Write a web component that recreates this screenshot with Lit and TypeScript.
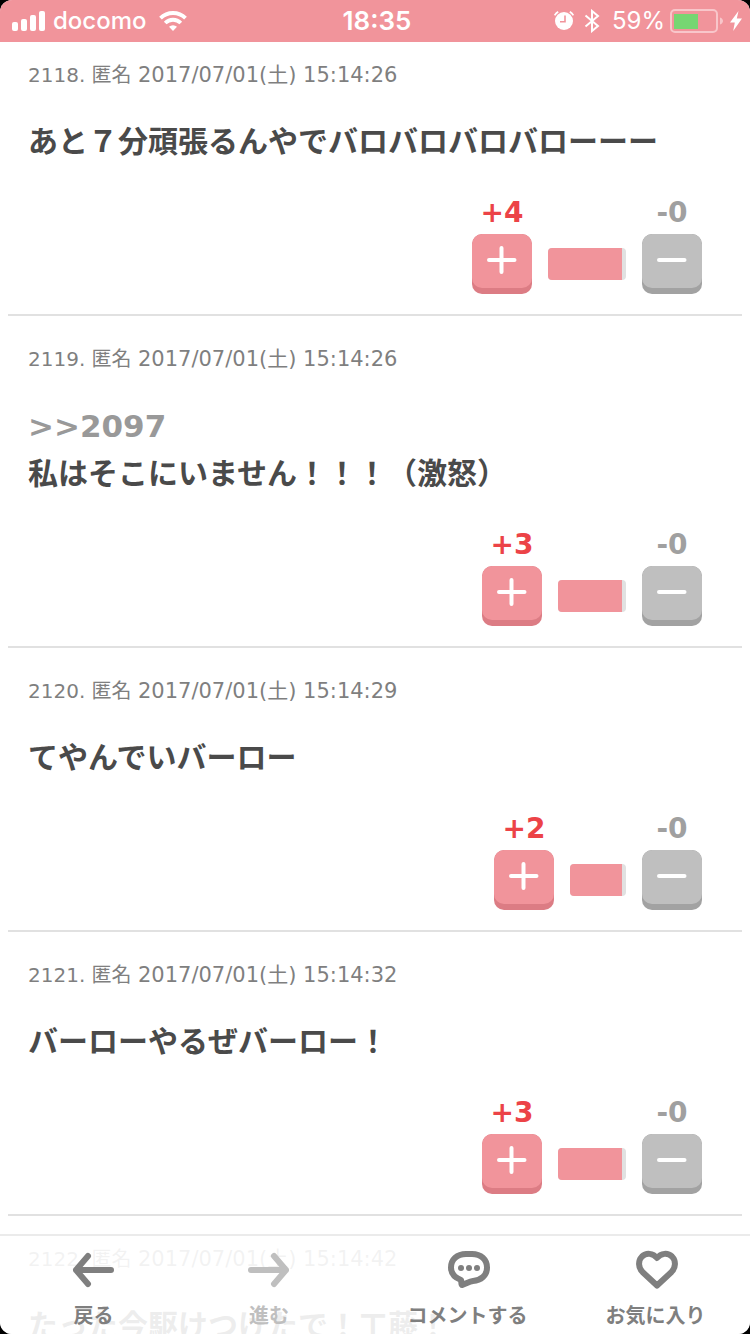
import { LitElement, html, svg, css } from "lit";
import { customElement, property } from "lit/decorators.js";

interface Comment {
  id: number;
  time: string;
  text: string;
  reply?: number;
  plus: number;
  minus: number;
  bar: number;
}

const comments: Comment[] = [
  { id: 2118, time: "15:14:26", text: "あと７分頑張るんやでバロバロバロバローーー", plus: 4, minus: 0, bar: 78 },
  { id: 2119, time: "15:14:26", text: "私はそこにいません！！！（激怒）", reply: 2097, plus: 3, minus: 0, bar: 68 },
  { id: 2120, time: "15:14:29", text: "てやんでいバーロー", plus: 2, minus: 0, bar: 56 },
  { id: 2121, time: "15:14:32", text: "バーローやるぜバーロー！", plus: 3, minus: 0, bar: 68 },
  { id: 2122, time: "15:14:42", text: "たった今駆けつけたで！工藤！", plus: 1, minus: 0, bar: 44 },
];

@customElement("status-bar")
class StatusBar extends LitElement {
  static styles = css`
    :host {
      display: grid;
      grid-template-columns: 1fr auto 1fr;
      align-items: center;
      height: 42px;
      padding: 0 8px 0 12px;
      background: #f1949b;
      color: #fff;
      font: 500 24px/42px Inter, "Noto Sans CJK JP", sans-serif;
    }
    .side { display: flex; align-items: center; }
    .carrier { margin: 0 12px 0 8px; }
    .time { font-size: 26px; font-weight: 600; }
    .end { justify-content: flex-end; }
    .percent { margin: 0 5px 0 12px; font-weight: 400; }
    .bt { margin-left: 10px; }
    .bolt { margin-left: 6px; }
    svg { display: block; flex: none; }
  `;

  render() {
    return html`
      <div class="side">
        <svg width="33" height="20" viewBox="0 0 33 20" fill="#fff" aria-hidden="true">
          <rect x="0" y="11" width="6" height="9" rx="2" />
          <rect x="9" y="8" width="6" height="12" rx="2" />
          <rect x="18" y="4" width="6" height="16" rx="2" />
          <rect x="27" y="0" width="6" height="20" rx="2" />
        </svg>
        <span class="carrier">docomo</span>
        <svg width="28" height="20" viewBox="0 0 28 20" fill="none" stroke="#fff" stroke-width="3.8" aria-hidden="true">
          <path d="M1.5 7.2a17.6 17.6 0 0 1 25 0" />
          <path d="M6.2 12a11 11 0 0 1 15.6 0" />
          <path d="M14 20l-4-4.2a5.8 5.8 0 0 1 8 0z" fill="#fff" stroke="none" />
        </svg>
      </div>
      <span class="time">18:35</span>
      <div class="side end">
        <svg width="20" height="20" viewBox="0 0 20 20" aria-hidden="true">
          <circle cx="10" cy="10" r="9" fill="#fff" />
          <path d="M.6 4.400A11 11 0 0 1 4.200.8M15.800.8a11 11 0 0 1 3.600 3.600" fill="none" stroke="#fff" stroke-width="1.8" />
          <path d="M11 4.500v6.300H6" fill="none" stroke="#f1949b" stroke-width="1.600" />
        </svg>
        <svg class="bt" width="16" height="24" viewBox="0 0 16 24" fill="none" stroke="#fff" stroke-width="2" aria-hidden="true">
          <path d="M1.500 6.500L14 17 8 22V2l6 5L1.500 17.500" />
        </svg>
        <span class="percent">59%</span>
        <svg width="54" height="24" viewBox="0 0 54 24" aria-hidden="true">
          <rect x="1" y="1" width="46" height="22" rx="4" fill="none" stroke="#f8c6ca" stroke-width="2" />
          <rect x="4" y="5" width="24" height="15" fill="#76d672" />
          <path d="M50 8.500c2 .6 3 2 3 3.500s-1 2.900-3 3.500z" fill="#f8c6ca" />
        </svg>
        <svg class="bolt" width="12" height="20" viewBox="0 0 12 20" fill="#fff" aria-hidden="true">
          <path d="M8.500 0L0 11.500h4.800L3.200 20 12 7.600H6.800z" />
        </svg>
      </div>
    `;
  }
}

@customElement("comment-item")
class CommentItem extends LitElement {
  @property({ attribute: false }) comment!: Comment;

  static styles = css`
    :host {
      display: block;
      margin: 0 8px;
      padding: 28px 40px 20px 20px;
      border-bottom: 2px solid #e1e1e1;
    }
    .meta { color: #7f7f7f; font-size: 20px; line-height: 30px; font-weight: 400; margin: 0 0 28px; }
    .date { font-size: 21px; }
    .body { color: #4a4a4a; font-size: 30px; line-height: 48px; font-weight: 700; margin: 0 0 28px; }
    .reply { display: block; color: #999; font-size: 31px; text-decoration: none; }
    .votes { display: flex; justify-content: flex-end; align-items: flex-end; gap: 16px; }
    .vote { display: flex; flex-direction: column; align-items: center; gap: 2px; width: 60px; font-size: 28px; line-height: 38px; font-weight: 700; }
    .plus { color: #ec4347; }
    .minus { color: #a0a0a0; }
    button {
      display: block;
      width: 60px;
      height: 60px;
      padding: 0 0 6px;
      border: 0;
      border-radius: 10px;
      background: #dc7c84;
      overflow: hidden;
    }
    .key { display: flex; align-items: center; justify-content: center; height: 54px; border-radius: 10px; background: #f1949b; }
    .minus button { background: #a2a2a2; }
    .minus .key { background: #bfbfbf; }
    .bar { height: 32px; margin-bottom: 14px; border-radius: 4px; background: #e1e1e1; overflow: hidden; }
    .fill { height: 100%; margin-right: 4px; background: #f1949b; }
  `;

  render() {
    const c = this.comment;
    return html`
      <p class="meta">${c.id}. 匿名 <time class="date">2017/07/01(土) ${c.time}</time></p>
      <p class="body">${c.reply ? html`<a class="reply" href="#${c.reply}">&gt;&gt;${c.reply}</a>` : ""}${c.text}</p>
      <div class="votes">
        <div class="vote plus">
          <span>+${c.plus}</span>
          <button aria-label="プラス">
            <span class="key">
              <svg width="30" height="30" viewBox="0 0 30 30" stroke="#fff" stroke-width="4" stroke-linecap="round"><path d="M2 14h25.500M14.500 2v24" /></svg>
            </span>
          </button>
        </div>
        <div class="bar" style="width:${c.bar}px"><div class="fill"></div></div>
        <div class="vote minus">
          <span>-${c.minus}</span>
          <button aria-label="マイナス">
            <span class="key">
              <svg width="30" height="30" viewBox="0 0 30 30" stroke="#fff" stroke-width="4" stroke-linecap="round"><path d="M2 14h25.500" /></svg>
            </span>
          </button>
        </div>
      </div>
    `;
  }
}

const icons = {
  back: svg`<path d="M39 22H4M16 8L4 22l12 14" />`,
  forward: svg`<path d="M4 22h35M27 8l12 14-12 14" />`,
  comment: svg`<path d="M20 6h6c9 0 15 5.500 15 13.500S35 32.500 27 33c-4 .5-7 3-11 4-1 0-.5-3.500-1-5C8.500 29.500 5 25 5 19.500 5 11.500 11 6 20 6z" /><g fill="currentColor" stroke="none"><circle cx="15" cy="20" r="3" /><circle cx="23" cy="20" r="3" /><circle cx="31" cy="20" r="3" /></g>`,
  heart: svg`<path d="M23 37.500L8.500 24C4 19.500 4 12.500 8 8.500c4.200-4 11-3.500 15 1.500 4-5 10.800-5.500 15-1.500 4 4 4 11-.5 15.500z" />`,
};

@customElement("tool-bar")
class ToolBar extends LitElement {
  static styles = css`
    :host {
      display: grid;
      grid-template-columns: 187fr 164fr 233fr 143fr 23fr;
      border-top: 2px solid #ebebeb;
      background: rgba(255, 255, 255, 0.9);
    }
    button {
      display: flex;
      flex-direction: column;
      align-items: center;
      gap: 9px;
      padding: 12px 0 5px;
      border: 0;
      background: none;
      color: #7f7f7f;
      font: 700 20px/28px "Noto Sans CJK JP", sans-serif;
      white-space: nowrap;
    }
    button:disabled { color: #bfbfbf; }
    svg { display: block; fill: none; stroke: currentColor; stroke-width: 6; stroke-linecap: round; stroke-linejoin: round; }
  `;

  private item(icon: unknown, label: string, disabled = false) {
    return html`<button ?disabled=${disabled}>
      <svg width="44" height="44" viewBox="0 0 44 44" aria-hidden="true">${icon}</svg>
      <span>${label}</span>
    </button>`;
  }

  render() {
    return html`
      ${this.item(icons.back, "戻る")}
      ${this.item(icons.forward, "進む", true)}
      ${this.item(icons.comment, "コメントする")}
      ${this.item(icons.heart, "お気に入り")}
    `;
  }
}

@customElement("app-root")
class AppRoot extends LitElement {
  static styles = css`
    :host { display: block; height: 100vh; background: #000; }
    .screen {
      position: relative;
      height: 100%;
      border-radius: 12px;
      overflow: hidden;
      background: #fff;
      font-family: "DejaVu Sans", "Noto Sans CJK JP", sans-serif;
    }
    .list { height: 100%; padding-top: 32px; box-sizing: border-box; overflow: hidden; }
    status-bar { position: absolute; top: 0; left: 0; right: 0; z-index: 1; }
    tool-bar { position: absolute; bottom: 0; left: 0; right: 0; z-index: 1; }
  `;

  render() {
    return html`
      <div class="screen">
        <status-bar></status-bar>
        <main class="list">${comments.map((c) => html`<comment-item .comment=${c}></comment-item>`)}</main>
        <tool-bar></tool-bar>
      </div>
    `;
  }
}
